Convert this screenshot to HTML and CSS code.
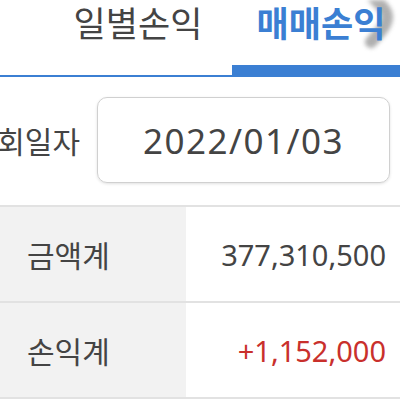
FILE: index.html
```html
<!DOCTYPE html>
<html lang="ko">
<head>
<meta charset="utf-8">
<link rel="stylesheet" href="styles.css">
</head>
<body>
<div class="page">
  <nav class="tabs">
    <div class="tab prev"><span class="tab-label">기간손익</span></div>
    <div class="tab"><span class="tab-label">일별손익</span></div>
    <div class="tab active"><span class="tab-label">매매손익</span></div>
  </nav>
  <svg class="scroll-hint" width="44" height="50" viewBox="0 0 44 50">
    <path d="M16 -4 C22 3 31 9 31 17 C31 26 22 34 15 42" fill="none" stroke="#9c9c9c" stroke-width="12" stroke-linecap="round"/>
  </svg>
  <div class="date-row">
    <span class="date-label">조회일자</span>
    <div class="date-box">2022/01/03</div>
  </div>
  <div class="summary">
    <div class="row">
      <div class="cell-label">금액계</div>
      <div class="cell-value">377,310,500</div>
    </div>
    <div class="row">
      <div class="cell-label">손익계</div>
      <div class="cell-value profit">+1,152,000</div>
    </div>
  </div>
</div>
</body>
</html>
```

FILE: styles.css
```css
html, body {
  margin: 0;
  padding: 0;
  background: #ffffff;
}
body {
  width: 400px;
  height: 400px;
  overflow: hidden;
  font-family: "Noto Sans", "Noto Sans CJK KR", sans-serif;
  color: #444444;
}
.page {
  position: relative;
  width: 400px;
  height: 400px;
  overflow: hidden;
}
.tabs {
  display: flex;
  margin-left: -124px;
  width: 534px;
  height: 75px;
  border-bottom: 2px solid #3b7fd3;
}
.tab {
  position: relative;
  z-index: 1;
  flex: 0 0 178px;
  display: flex;
  justify-content: center;
  align-items: flex-start;
  box-sizing: border-box;
}
.tab-label {
  font-family: "Noto Sans CJK KR", sans-serif;
  font-size: 35px;
  line-height: 44px;
  white-space: nowrap;
  color: #444444;
  font-weight: 400;
}
.tab.prev .tab-label {
  margin-left: -66px;
}
.tab:nth-child(2) .tab-label {
  margin-left: -10px;
}
.tab.active {
  box-shadow: inset 0 -10px 0 #3b7fd3;
}
.tab.active .tab-label {
  color: #3b7fd3;
  font-weight: 700;
  margin-left: 0;
}
.scroll-hint {
  position: absolute;
  left: 356px;
  top: 0;
  z-index: 0;
  filter: blur(2px);
  opacity: 0.8;
}
.date-row {
  display: flex;
  justify-content: flex-end;
  align-items: center;
  gap: 17px;
  padding: 20px 10px 22px 0;
}
.date-label {
  font-family: "Noto Sans CJK KR", sans-serif;
  font-size: 30px;
  white-space: nowrap;
  color: #444444;
}
.date-box {
  flex: 0 0 293px;
  height: 86px;
  box-sizing: border-box;
  border: 1.5px solid #d0d0d0;
  border-radius: 10px;
  box-shadow: 0 1px 3px rgba(0, 0, 0, 0.12);
  display: flex;
  align-items: center;
  justify-content: center;
  font-size: 35px;
  letter-spacing: 1.5px;
  color: #444444;
}
.summary {
  border-top: 2px solid #e2e2e2;
}
.row {
  display: flex;
  height: 94px;
  border-bottom: 2px solid #e2e2e2;
}
.cell-label {
  flex: 0 0 186px;
  background: #f2f2f2;
  display: flex;
  align-items: center;
  padding-left: 27px;
  box-sizing: border-box;
  font-family: "Noto Sans CJK KR", sans-serif;
  font-size: 30px;
}
.cell-value {
  flex: 1;
  display: flex;
  align-items: center;
  justify-content: flex-end;
  padding-right: 14px;
  font-size: 29px;
}
.cell-value.profit {
  color: #c9302c;
}
```
